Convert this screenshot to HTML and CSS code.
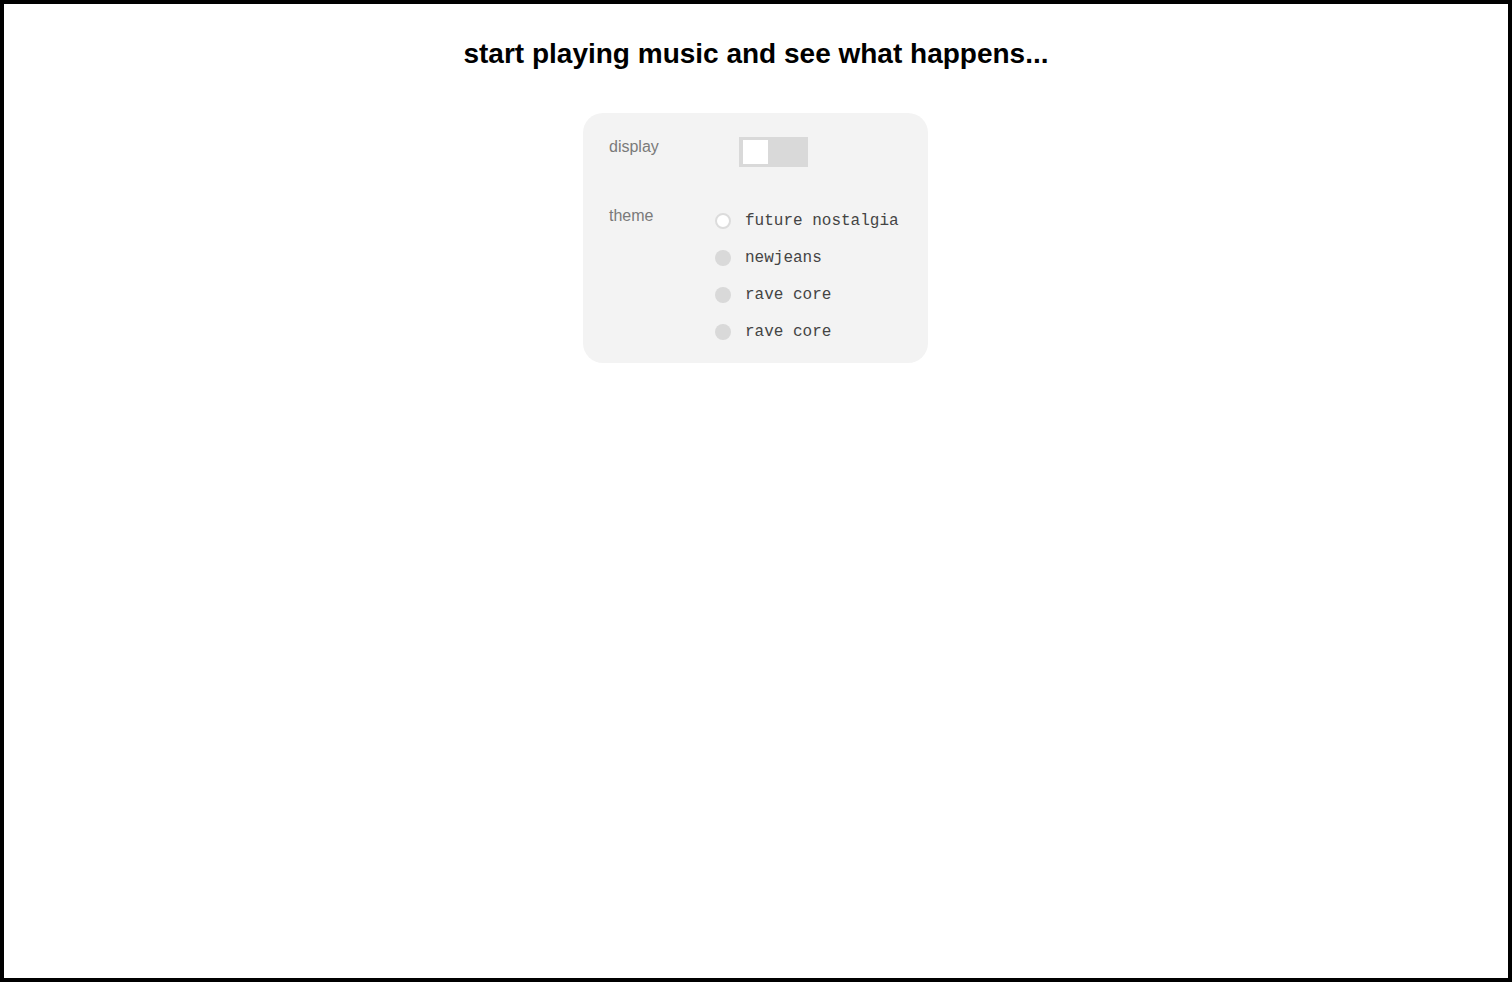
FILE: index.html
```html
<!DOCTYPE html>
<html lang="en">
<head>
<meta charset="utf-8">
<title>start playing music</title>
<link rel="stylesheet" href="styles.css">
</head>
<body>
<main class="frame">
  <h1 class="title">start playing music and see what happens...</h1>
  <section class="panel">
    <div class="label">display</div>
    <div class="control">
      <div class="toggle"><span class="knob"></span></div>
    </div>
    <div class="label theme-label">theme</div>
    <ul class="options">
      <li class="option"><span class="radio selected"></span><span class="opt-text">future nostalgia</span></li>
      <li class="option"><span class="radio"></span><span class="opt-text">newjeans</span></li>
      <li class="option"><span class="radio"></span><span class="opt-text">rave core</span></li>
      <li class="option"><span class="radio"></span><span class="opt-text">rave core</span></li>
    </ul>
  </section>
</main>
</body>
</html>
```
FILE: styles.css
```css
* { box-sizing: border-box; }
html, body { margin: 0; padding: 0; }
body {
  background: #fff;
  font-family: "Liberation Sans", Arial, sans-serif;
}
.frame {
  height: 100vh;
  border: 4px solid #000;
  display: flex;
  flex-direction: column;
  align-items: center;
}
.title {
  margin: 34px 0 0;
  font-size: 28px;
  font-weight: bold;
  line-height: 32px;
  color: #000;
}
.panel {
  margin-top: 43px;
  margin-right: 1px;
  width: 345px;
  height: 250px;
  background: #f3f3f3;
  border-radius: 20px;
  padding: 24px 26px 0;
  display: grid;
  grid-template-columns: 106px 1fr;
  grid-template-rows: 30px auto;
  row-gap: 40px;
}
.label {
  font-size: 16px;
  color: #7a7a7a;
  line-height: 18px;
  padding-top: 1px;
}
.theme-label { margin-top: -1px; }
.control { display: flex; }
.toggle {
  margin-left: 24px;
  width: 69px;
  height: 30px;
  background: #d9d9d9;
  padding: 3px 4px;
}
.knob {
  display: block;
  width: 25px;
  height: 24px;
  background: #fff;
}
.options {
  list-style: none;
  margin: 0;
  padding: 6px 0 0;
  display: flex;
  flex-direction: column;
  gap: 21px;
}
.option {
  display: flex;
  align-items: center;
  height: 16px;
}
.radio {
  width: 16px;
  height: 16px;
  border-radius: 50%;
  background: #d9d9d9;
  flex: none;
}
.radio.selected {
  background: #fff;
  border: 2px solid #dcdcdc;
}
.opt-text {
  margin-left: 14px;
  font-family: "Liberation Mono", "Courier New", monospace;
  font-size: 16px;
  color: #444;
  line-height: 16px;
}
```
